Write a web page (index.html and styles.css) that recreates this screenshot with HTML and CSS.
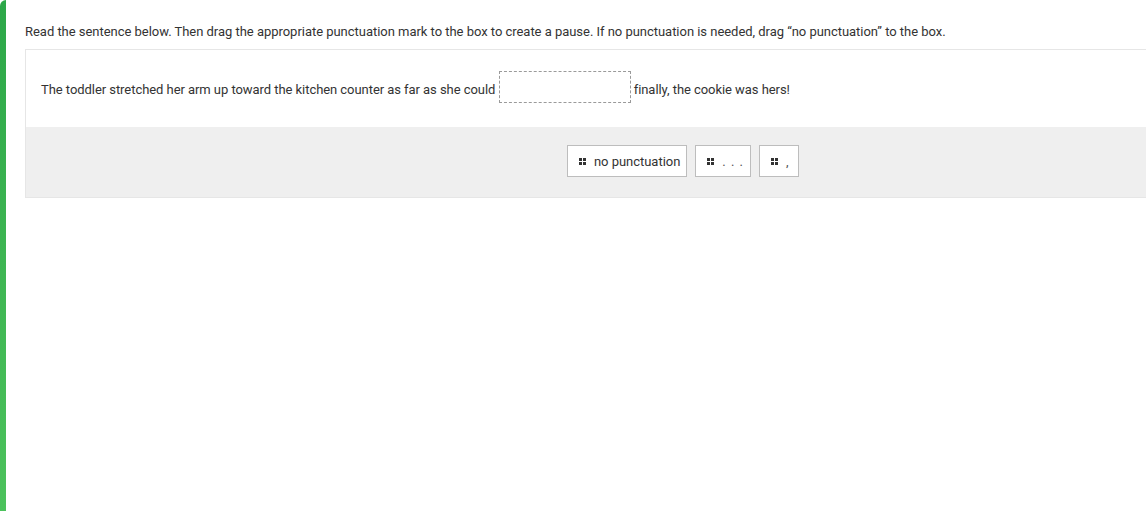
FILE: index.html
```html
<!DOCTYPE html>
<html lang="en">
<head>
<meta charset="utf-8">
<title>Punctuation drag and drop</title>
<link rel="stylesheet" href="styles.css">
</head>
<body>
<div class="page">
  <div class="accent"></div>
  <main class="main">
    <p class="instructions">Read the sentence below. Then drag the appropriate punctuation mark to the box to create a pause. If no punctuation is needed, drag “no punctuation” to the box.</p>
    <section class="card">
      <div class="sentence">The toddler stretched her arm up toward the kitchen counter as far as she could <span class="dropzone"></span> finally, the cookie was hers!</div>
      <div class="choices">
        <button class="choice"><svg class="grip" width="7" height="7" viewBox="0 0 7 7"><rect x="0" y="0" width="3" height="3"/><rect x="4" y="0" width="3" height="3"/><rect x="0" y="4" width="3" height="3"/><rect x="4" y="4" width="3" height="3"/></svg><span>no punctuation</span></button>
        <button class="choice"><svg class="grip" width="7" height="7" viewBox="0 0 7 7"><rect x="0" y="0" width="3" height="3"/><rect x="4" y="0" width="3" height="3"/><rect x="0" y="4" width="3" height="3"/><rect x="4" y="4" width="3" height="3"/></svg><span class="mark dots">. . .</span></button>
        <button class="choice"><svg class="grip" width="7" height="7" viewBox="0 0 7 7"><rect x="0" y="0" width="3" height="3"/><rect x="4" y="0" width="3" height="3"/><rect x="0" y="4" width="3" height="3"/><rect x="4" y="4" width="3" height="3"/></svg><span class="mark">,</span></button>
      </div>
    </section>
  </main>
</div>
</body>
</html>
```

FILE: styles.css
```css
html, body {
  margin: 0;
  padding: 0;
  overflow: hidden;
  background: #fff;
}

body {
  font-family: Roboto, "Liberation Sans", Arial, sans-serif;
  font-size: 13px;
  letter-spacing: -0.03px;
  color: #333;
}

.page {
  display: flex;
  height: 511px;
}

.accent {
  flex: 0 0 6px;
  width: 6px;
  border-top-left-radius: 7px;
  background: linear-gradient(to bottom, #2ca748 0%, #3db552 50%, #4cc25c 100%);
}

.main {
  flex: 0 0 auto;
  padding-left: 19px;
}

.instructions {
  margin: 0;
  padding-top: 23px;
  line-height: 18px;
  height: 18px;
  margin-bottom: 8px;
  white-space: nowrap;
}

.card {
  width: 1314px;
  border: 1px solid #e6e6e6;
  border-right: none;
}

.sentence {
  padding: 21px 15px 24px;
  line-height: 18px;
  height: 32px;
  white-space: nowrap;
  letter-spacing: -0.055px;
  background: #fff;
}

.dropzone {
  display: inline-block;
  vertical-align: -9px;
  width: 130px;
  height: 30px;
  border: 1px dashed #9a9a9a;
}

.choices {
  display: flex;
  justify-content: center;
  gap: 8px;
  padding: 18px 0 20px;
  background: #efefef;
}

.choice {
  display: flex;
  align-items: center;
  gap: 8px;
  box-sizing: border-box;
  min-width: 40px;
  height: 32px;
  padding: 0 6px 0 11px;
  border: 1px solid #bdbdbd;
  background: #fff;
  font-family: inherit;
  font-size: 13px;
  letter-spacing: -0.03px;
  color: #333;
  border-radius: 0;
}

.grip {
  fill: #333;
  flex: 0 0 auto;
}

.mark {
  color: #555;
}

.dots {
  letter-spacing: 1px;
}
```
